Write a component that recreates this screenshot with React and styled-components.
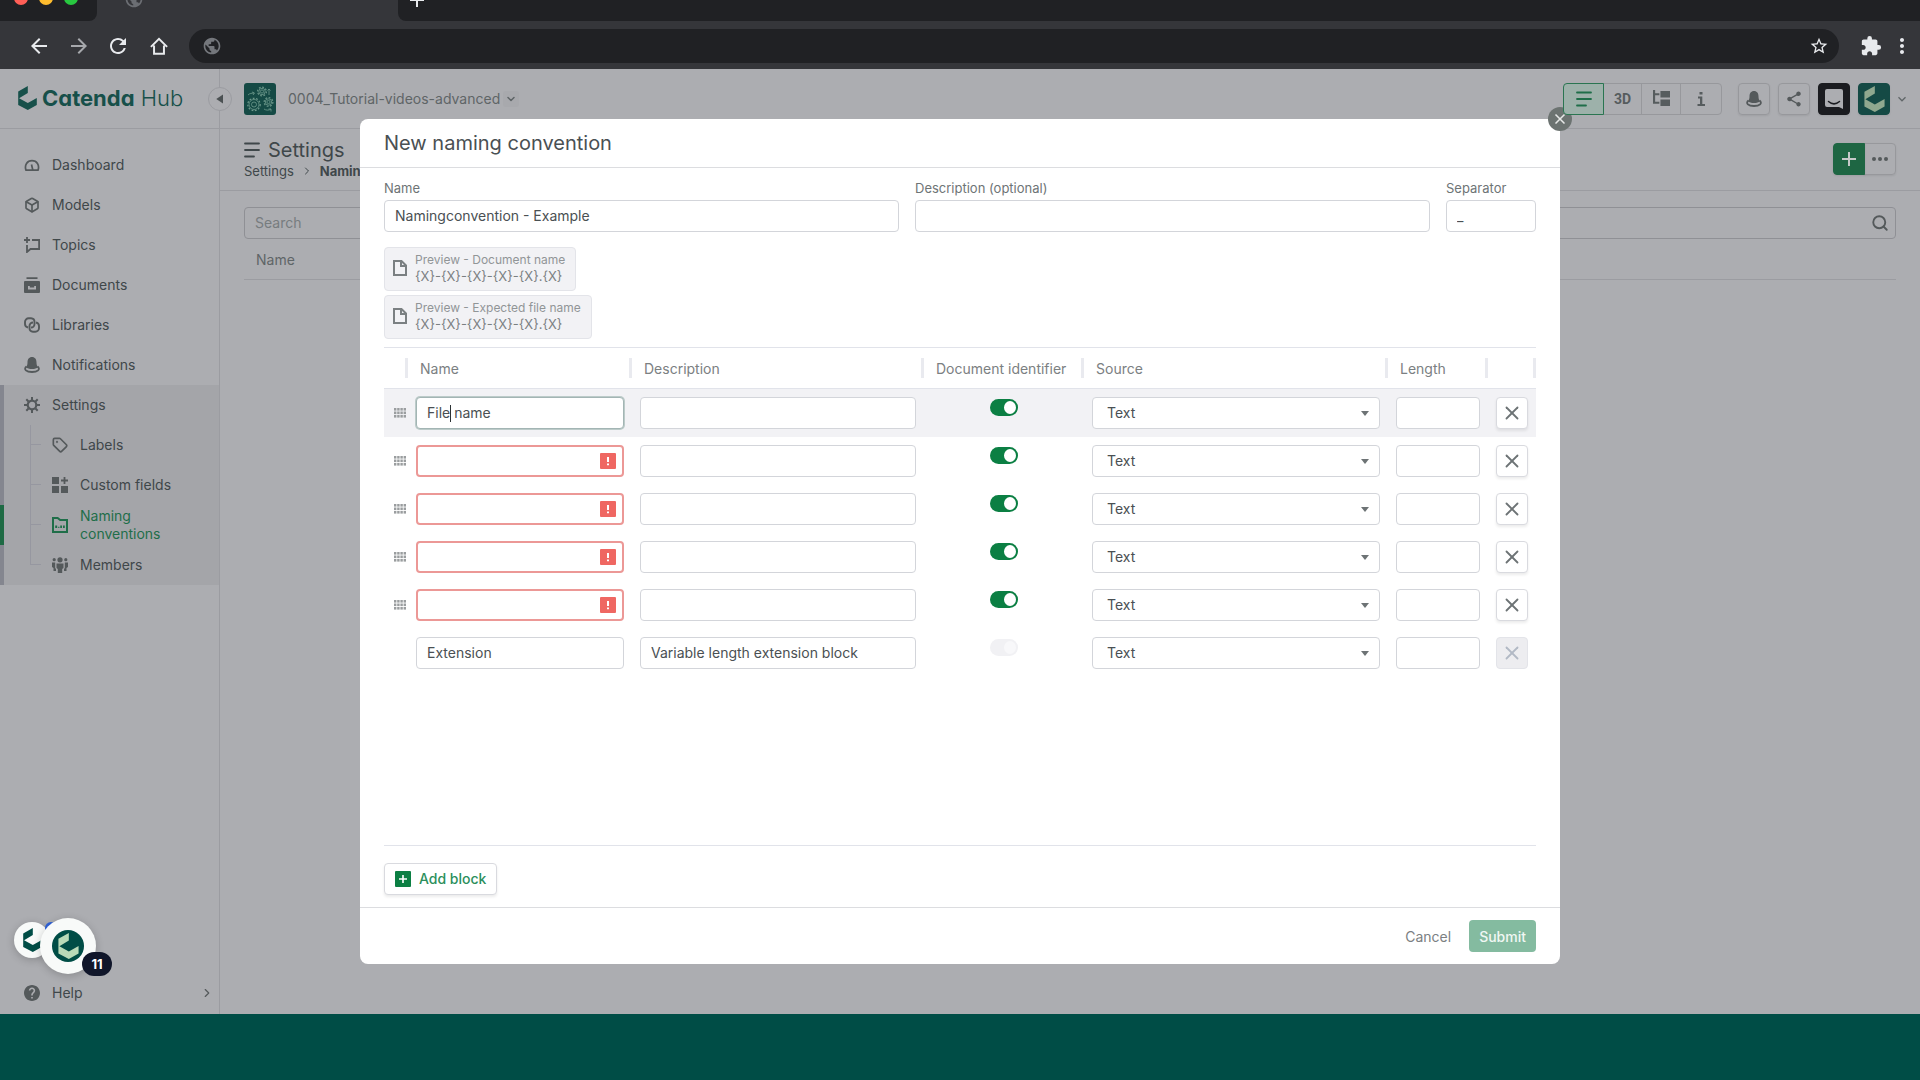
import React, { useState } from 'react';
import styled, { createGlobalStyle, css } from 'styled-components';
import {
  MdAdd,
  MdArrowBack,
  MdArrowForward,
  MdExtension,
  MdMoreVert,
  MdPublic,
  MdRefresh,
  MdShare,
  MdStarBorder,
} from 'react-icons/md';
import { Box, ChevronDown, ChevronRight, Search, Tag, X } from 'lucide-react';

const GlobalStyle = createGlobalStyle`
  *, *::before, *::after { box-sizing: border-box; }
  body {
    margin: 0;
    overflow: hidden;
    background: #004d46;
    color: #3f474a;
    font-family: Inter, "Liberation Sans", sans-serif;
    font-size: 14px;
    line-height: 18px;
  }
  button, input, select { font: inherit; color: inherit; margin: 0; }
  button { cursor: pointer; padding: 0; }
  a { color: inherit; text-decoration: none; }
  svg { display: block; flex: none; }
`;

const Page = styled.div`
  display: flex;
  flex-direction: column;
  height: 100vh;
`;

/* ---------- browser ---------- */

const Browser = styled.header`
  flex: none;
  background: #35363a;
`;

const TabStrip = styled.div`
  display: flex;
  height: 42px;
  margin-top: -21px;
`;

const StripPart = styled.div`
  display: flex;
  align-items: center;
  gap: 11px;
  padding: ${({ $grow }) => ($grow ? '0 7px' : '0 14px 4px')};
  background: #202124;
  width: ${({ $grow }) => ($grow ? 'auto' : '97px')};
  flex: ${({ $grow }) => ($grow ? '1' : 'none')};
  border-radius: ${({ $grow }) => ($grow ? '0 0 0 8px' : '0 0 8px 0')};
  color: #e8eaed;
`;

const Light = styled.span`
  width: 14px;
  height: 14px;
  border-radius: 50%;
  background: ${({ $color }) => $color};
`;

const ActiveTab = styled.div`
  display: flex;
  align-items: center;
  width: 301px;
  padding: 0 27px 2px;
  color: #6b6e73;
`;

const AddressRow = styled.div`
  display: flex;
  align-items: center;
  height: 48px;
  padding: 1px 13px 0 27px;
  color: #e8eaed;
`;

const ChromeButton = styled.button`
  display: flex;
  align-items: center;
  justify-content: center;
  width: ${({ $width }) => $width || 24}px;
  height: 24px;
  margin-right: ${({ $after }) => $after || 0}px;
  border: 0;
  background: none;
  color: ${({ $dim }) => ($dim ? '#a6a8ac' : '#e8eaed')};
`;

const Omnibox = styled.div`
  display: flex;
  align-items: center;
  flex: 1;
  height: 34px;
  margin-right: 20px;
  padding: 0 8px 0 13px;
  border-radius: 17px;
  background: #202124;
  color: #74777c;

  input {
    flex: 1;
    min-width: 0;
    border: 0;
    outline: 0;
    background: none;
    color: #e8eaed;
  }
`;

/* ---------- application shell ---------- */

const Workspace = styled.div`
  position: relative;
  display: flex;
  flex: 1;
  min-height: 0;
  background: #acadb1;
`;

const Sidebar = styled.aside`
  display: flex;
  flex-direction: column;
  flex: none;
  width: 220px;
  border-right: 1px solid #9b9ca1;
`;

const Brand = styled.a`
  position: relative;
  display: flex;
  align-items: center;
  height: 60px;
  padding: 0 0 2px 18px;
  gap: 5px;
  border-bottom: 1px solid #9b9ca1;
  color: #17504a;
  font-size: 22px;
  line-height: 28px;
  font-weight: 300;
  font-feature-settings: 'cv11', 'ss03';

  b { font-weight: 700; }
`;

const Collapse = styled.button`
  position: absolute;
  top: 18px;
  left: 208px;
  display: flex;
  align-items: center;
  justify-content: center;
  width: 24px;
  height: 24px;
  border: 1px solid #9b9ca1;
  border-radius: 50%;
  background: #acadb1;
  color: #4b5153;
`;

const Nav = styled.nav`
  display: flex;
  flex-direction: column;
  flex: 1;
  padding: 16px 0 1px;
`;

const NavLink = styled.a`
  display: flex;
  align-items: center;
  gap: 12px;
  height: 40px;
  padding-left: 24px;
  color: ${({ $active }) => ($active ? '#1f6e49' : '#3f474a')};

  > svg { color: ${({ $active }) => ($active ? '#1f6e49' : '#54595b')}; }
`;

const Group = styled.div`
  background: #a4a5a9;
  border-left: 4px solid #84868f;

  > ${NavLink} { padding-left: 20px; }
`;

const SubList = styled.ul`
  margin: 0;
  padding: 0;
  list-style: none;
  background: linear-gradient(#9697a0, #9697a0) 26px 0 / 1px 140px no-repeat;
`;

const SubItem = styled.li`
  margin-left: -4px;
  border-left: 4px solid ${({ $active }) => ($active ? '#1e6a44' : 'transparent')};
  background: linear-gradient(#9697a0, #9697a0) 26px 19px / 11px 1px no-repeat;

  ${NavLink} { padding-left: 48px; }
`;

const HelpLink = styled(NavLink)`
  margin-top: auto;
  padding-right: 5px;

  span { flex: 1; }
`;

const Main = styled.main`
  flex: 1;
  min-width: 0;
`;

const TopBar = styled.div`
  display: flex;
  align-items: center;
  height: 60px;
  padding: 0 14px 0 24px;
  border-bottom: 1px solid #9b9ca1;
  color: #5f6567;
`;

const ProjectName = styled.button`
  display: flex;
  align-items: center;
  gap: 3px;
  margin: 0 auto 0 12px;
  border: 0;
  background: none;
`;

const ChevronBox = styled.span`
  display: flex;
  padding: 2px;
  border-radius: 3px;
  background: #a8a9ad;
`;

const Segments = styled.div`
  display: flex;
  margin-right: 16px;
`;

const Segment = styled.button`
  display: flex;
  align-items: center;
  justify-content: center;
  width: ${({ $width }) => $width}px;
  height: 32px;
  margin-left: -1px;
  border: 1px solid #97989c;
  background: none;
  color: #565c5e;
  font-family: Roboto, sans-serif;
  font-weight: 700;

  &:first-child { border-radius: 4px 0 0 4px; margin-left: 0; }
  &:last-child { border-radius: 0 4px 4px 0; }
  ${({ $active }) => $active && css`
    z-index: 1;
    border-color: #2a7551;
    background: #9db1aa;
    color: #1f6e49;
  `}
`;

const IconButton = styled.button`
  display: flex;
  align-items: center;
  justify-content: center;
  width: 32px;
  height: 32px;
  margin-right: 8px;
  border: 1px solid #97989c;
  border-radius: 4px;
  background: none;
  box-shadow: 0 1px 2px rgba(0, 0, 0, 0.08);
  color: #54595b;
  ${({ $fill }) => $fill && css`
    border-color: ${$fill};
    background: ${$fill};
    color: #8fa88f;
  `}
`;

const TitleBar = styled.div`
  display: flex;
  justify-content: space-between;
  align-items: flex-start;
  height: 62px;
  padding: 10px 24px 0;
  border-bottom: 1px solid #9b9ca1;

  h1 {
    display: flex;
    align-items: center;
    gap: 8px;
    margin: 0;
    font-size: 20px;
    line-height: 22px;
    font-weight: 400;
  }
`;

const Crumbs = styled.div`
  display: flex;
  align-items: center;
  gap: 7px;
  margin-top: 1px;
  font-size: 13px;
`;

const Actions = styled.div`
  display: flex;
  margin-top: 4px;

  ${IconButton} { margin: 0; }
  ${IconButton}:first-child { z-index: 1; border-radius: 4px 0 0 4px; color: #c5c9c8; }
  ${IconButton}:last-child { margin-left: -1px; border-radius: 0 4px 4px 0; }
`;

const Listing = styled.section`
  padding: 16px 24px 0;
`;

const SearchBox = styled.label`
  display: flex;
  align-items: center;
  height: 32px;
  padding: 0 6px 0 10px;
  border: 1px solid #8f9095;
  border-radius: 4px;
  color: #54595b;

  input {
    flex: 1;
    border: 0;
    outline: 0;
    padding: 0;
    background: none;
  }
  input::placeholder { color: #777c7f; opacity: 1; }
`;

const ListHead = styled.div`
  height: 41px;
  padding: 12px;
  border-bottom: 1px solid #9b9ca1;
  color: #5f6567;
`;

/* ---------- floating chat ---------- */

const Bubble = styled.button`
  position: absolute;
  display: flex;
  align-items: center;
  justify-content: center;
  left: ${({ $small }) => ($small ? 14 : 40)}px;
  bottom: ${({ $small }) => ($small ? 56 : 40)}px;
  width: ${({ $small }) => ($small ? 36 : 56)}px;
  height: ${({ $small }) => ($small ? 36 : 56)}px;
  border: 0;
  border-radius: 50%;
  background: #f8faf9;
  box-shadow: 0 2px 8px rgba(0, 0, 0, 0.2);
  color: #004d46;
`;

const BlueDot = styled.span`
  position: absolute;
  left: 45px;
  bottom: 80px;
  width: 12px;
  height: 12px;
  border-radius: 50%;
  background: #2f62d9;
`;

const Disc = styled.span`
  display: flex;
  align-items: center;
  justify-content: center;
  width: 32px;
  height: 32px;
  border-radius: 50%;
  background: #004d46;
  color: #b9dab8;
`;

const Count = styled.span`
  position: absolute;
  left: 42px;
  bottom: -2px;
  width: 30px;
  border-radius: 12px;
  background: #10162a;
  color: #fff;
  font-size: 13px;
  line-height: 24px;
  font-weight: 700;
`;

/* ---------- dialog ---------- */

const Backdrop = styled.div`
  position: absolute;
  inset: 0;
  display: flex;
  align-items: stretch;
  justify-content: center;
  padding: 50px 48px;
`;

const Dialog = styled.form`
  position: relative;
  display: flex;
  flex-direction: column;
  width: 100%;
  max-width: 1200px;
  border-radius: 8px;
  background: #fff;
  color: #4a5053;
`;

const DialogTitle = styled.h2`
  flex: none;
  margin: 0;
  padding: 12px 24px;
  border-bottom: 1px solid #dcdde0;
  font-size: 20px;
  line-height: 24px;
  font-weight: 400;
`;

const CloseButton = styled.button`
  position: absolute;
  top: -12px;
  right: -12px;
  display: flex;
  align-items: center;
  justify-content: center;
  width: 24px;
  height: 24px;
  border: 0;
  border-radius: 50%;
  background: #6c7371;
  color: #e6e8e7;
`;

const DialogBody = styled.div`
  display: flex;
  flex-direction: column;
  flex: 1;
  min-height: 0;
  padding: 12px 24px 0;
`;

const Fields = styled.div`
  display: grid;
  grid-template-columns: 1fr 1fr 90px;
  gap: 16px;
`;

const Field = styled.label`
  display: flex;
  flex-direction: column;
  gap: 4px;
  color: #6e7476;
  font-size: 13px;
  line-height: 16px;
`;

const TextInput = styled.input`
  display: block;
  width: 100%;
  height: 32px;
  padding: 0 10px 1px;
  border: 1px solid #d3d5da;
  border-radius: 4px;
  outline: 0;
  background: #fff;
  color: #4a5053;
  font-size: 14px;
  ${({ $invalid }) => $invalid && css`
    border: 2px solid #ec9896;
  `}
  ${({ $focused }) => $focused && css`
    border-color: #a3b5b4;
    box-shadow: 0 0 0 1px #bccbc9;
  `}
`;

const Previews = styled.div`
  display: flex;
  flex-direction: column;
  align-items: flex-start;
  gap: 4px;
  margin: 15px 0 8px;
`;

const Preview = styled.div`
  display: flex;
  align-items: center;
  gap: 7px;
  height: 44px;
  padding: 0 10px 2px 7px;
  border: 1px solid #e3e4e9;
  border-radius: 4px;
  background: #f2f2f5;
  color: #7b8082;
  font-size: 13px;
  line-height: 17px;

  small {
    display: block;
    color: #919597;
    font-size: 12px;
  }
`;

const TableArea = styled.div`
  flex: 1;
  min-height: 0;
  overflow: auto;
  border-top: 1px solid #e1e3ea;
  border-bottom: 1px solid #e1e3ea;
`;

const Table = styled.table`
  width: 100%;
  border-collapse: separate;
  border-spacing: 0;
  table-layout: fixed;
`;

const HeadCell = styled.th`
  width: ${({ $width }) => ($width ? `${$width}px` : 'auto')};
  height: 41px;
  padding: 2px 0 0 12px;
  border-bottom: 1px solid #e1e3ea;
  background: linear-gradient(#e9eaef, #e9eaef) right 0 top 10px / 3px 20px no-repeat;
  color: #7b8082;
  font-weight: 400;
  text-align: left;
`;

const BlockRow = styled.tr`
  background: ${({ $active }) => ($active ? '#f2f2f5' : 'transparent')};
`;

const Cell = styled.td`
  height: 48px;
  padding: ${({ $flush }) => ($flush ? '0 0 0 10px' : '8px')};
  vertical-align: ${({ $top }) => ($top ? 'top' : 'middle')};
  color: #9a9d9f;
`;

const Control = styled.div`
  position: relative;

  > svg {
    position: absolute;
    top: 8px;
    right: 8px;
    pointer-events: none;
  }
`;

const Caret = styled.span`
  position: absolute;
  top: 8px;
  left: 34px;
  width: 1px;
  height: 17px;
  background: #2c3234;
`;

const Toggle = styled.input`
  appearance: none;
  display: block;
  width: 28px;
  height: 17px;
  margin: 2px auto 0;
  border-radius: 9px;
  background: #0b7f43;

  &::after {
    content: '';
    display: block;
    width: 12px;
    height: 13px;
    margin: 2px 2px 2px auto;
    border-radius: 50%;
    background: #fff;
  }
  &:disabled { background: #f1f1f4; }
  &:disabled::after { background: #f8f8fa; }
`;

const SelectInput = styled.select`
  appearance: none;
  display: block;
  width: 100%;
  height: 32px;
  padding: 0 14px;
  border: 1px solid #d3d5da;
  border-radius: 4px;
  background: #fff;
  color: #4a5053;
`;

const RemoveButton = styled.button`
  display: flex;
  align-items: center;
  justify-content: center;
  width: 32px;
  height: 32px;
  border: 1px solid #d9dadf;
  border-radius: 4px;
  background: #fff;
  box-shadow: 0 2px 3px rgba(0, 0, 0, 0.08);
  color: #6d7375;

  &:disabled {
    border-color: #e3e4e9;
    background: #ededf0;
    box-shadow: none;
    color: #b2b9c5;
  }
`;

const AddBar = styled.div`
  padding: 17px 0 12px;
`;

const AddButton = styled.button`
  display: flex;
  align-items: center;
  gap: 8px;
  height: 32px;
  padding: 0 10px;
  border: 1px solid #d9dadf;
  border-radius: 4px;
  background: #fff;
  box-shadow: 0 2px 3px rgba(0, 0, 0, 0.08);
  color: #2c8f5c;
  font-weight: 500;
`;

const DialogFooter = styled.div`
  display: flex;
  justify-content: flex-end;
  gap: 8px;
  padding: 12px 24px;
  border-top: 1px solid #dcdde0;
`;

const FooterButton = styled.button`
  height: 32px;
  padding: 1px 10px 0;
  border: 0;
  border-radius: 4px;
  background: ${({ $primary }) => ($primary ? '#84bba0' : 'none')};
  color: ${({ $primary }) => ($primary ? '#f0f7f3' : '#7b8082')};
  font-weight: ${({ $primary }) => ($primary ? 500 : 400)};
`;

const PageFooter = styled.footer`
  flex: none;
  height: 66px;
  background: #004d46;
`;

/* ---------- icons ---------- */

const Icon = ({ size = 16, children, ...rest }) => (
  <svg width={size} height={size} viewBox="0 0 16 16" fill="currentColor" aria-hidden="true" {...rest}>
    {children}
  </svg>
);

const Mark = ({ height }) => (
  <svg width={Math.round(height * 0.79)} height={height} viewBox="0 0 31 40" fill="currentColor" aria-hidden="true">
    <path d="M16 0v11.500L1.500 20.500 16 28.500 31 20v11.500L16 40 0 31.500V9z" />
  </svg>
);

const HomeIcon = () => (
  <svg width="18" height="18" viewBox="0 0 20 20" fill="none" stroke="currentColor" strokeWidth="2.200">
    <path d="M1 11 10 2l9 9M4.500 9.500v9h11v-9" />
  </svg>
);

const HelpIcon = () => (
  <svg width="16" height="16" viewBox="2 2 20 20" fill="currentColor" aria-hidden="true">
    <path d="M12 2C6.480 2 2 6.480 2 12s4.480 10 10 10 10-4.480 10-10S17.520 2 12 2zm1 17h-2v-2h2v2zm2.070-7.750l-.9.920C13.450 12.900 13 13.500 13 15h-2v-.5c0-1.100.450-2.100 1.170-2.830l1.240-1.260c.370-.360.590-.860.590-1.410 0-1.100-.9-2-2-2s-2 .9-2 2H8c0-2.210 1.790-4 4-4s4 1.790 4 4c0 .880-.360 1.680-.930 2.250z" />
  </svg>
);

const DashboardIcon = () => (
  <Icon fill="none" stroke="currentColor" strokeWidth="1.700">
    <path d="M2 13.200C.2 8 3.200 3.600 8 3.600s7.800 4.400 6 9.600zM8.800 13 7.500 7.500" />
  </Icon>
);

const TopicsIcon = () => (
  <Icon fill="none" stroke="currentColor" strokeWidth="1.800">
    <path d="M3 0v6M0 3h6M8 3h7.100v9H6.500L3 15V8" />
  </Icon>
);

const DocumentsIcon = () => (
  <Icon>
    <path d="M2.500.3h11v1.800h-11zM1 4h14a1 1 0 0 1 1 1v10a1 1 0 0 1-1 1H1a1 1 0 0 1-1-1V5a1 1 0 0 1 1-1zm3 5v3.500h8V9h-1.800v1.500H5.800V9z" fillRule="evenodd" />
  </Icon>
);

const LibrariesIcon = () => (
  <Icon fill="none" stroke="currentColor" strokeWidth="1.900">
    <path d="M4 10.500A3.700 3.700 0 0 1 1 7V5a3.700 3.700 0 0 1 3.700-3.700H7A3.700 3.700 0 0 1 10.500 5v2A3.500 3.500 0 0 1 7 10.500" />
    <path d="M12 5.500A3.700 3.700 0 0 1 15 9v2a3.700 3.700 0 0 1-3.700 3.700H9A3.700 3.700 0 0 1 5.500 11V9A3.500 3.500 0 0 1 9 5.500" />
  </Icon>
);

const BellIcon = () => (
  <Icon>
    <path d="M8 0C5 0 3.500 2.300 3.500 5.500 3.500 7.500 3 9 1.900 10c1.300 1.400 3.500 2 6.100 2s4.800-.6 6.100-2c-1.100-1-1.600-2.500-1.600-4.500C12.500 2.300 11 0 8 0z" />
    <path d="M2.500 9.500C-1 12.500 2.500 15 8 15s9-2.500 5.500-5.500" fill="none" stroke="currentColor" strokeWidth="1.800" />
  </Icon>
);

const GearIcon = () => (
  <Icon fill="none" stroke="currentColor">
    <circle cx="8" cy="8" r="4.300" strokeWidth="2.200" />
    <path d="M8 0v3M8 13v3M0 8h3M13 8h3M2.300 2.300l2.200 2.200M11.500 11.500l2.200 2.200M13.700 2.300l-2.200 2.200M4.500 11.500l-2.200 2.200" strokeWidth="2" />
  </Icon>
);

const FieldsIcon = () => (
  <Icon>
    <path d="M0 0h7v7H0zM0 9h7v7H0zM9 9h7v7H9zM11.600 0h1.800v2.600H16v1.800h-2.600V7h-1.800V4.400H9V2.600h2.600z" />
  </Icon>
);

const NamingIcon = () => (
  <Icon>
    <path d="M0 0h6l2.500 2H16v14H0zm2 2v12h12V4H7.800L5.300 2z" fillRule="evenodd" />
    <path d="M3.200 8.500h2V11h-2zM6.200 9.800h1.200V11H6.200zM8.200 8.500h1.800V11H8.200zM11 8.500h1.800V11H11z" />
  </Icon>
);

const MembersIcon = () => (
  <Icon>
    <circle cx="8" cy="2.800" r="2.600" />
    <circle cx="2.200" cy="2.700" r="1.600" />
    <circle cx="13.800" cy="2.700" r="1.600" />
    <path d="M4.500 6.500h7V11l-1.300 1v4H5.800v-4l-1.300-1zM0 5.500h3.200V11l.8 1v2H1.500v-3L0 10zM16 5.500h-3.200V11l-.8 1v2h2.500v-3l1.500-1z" />
  </Icon>
);

const LinesIcon = () => (
  <Icon fill="none" stroke="currentColor" strokeWidth="1.800" strokeLinecap="round">
    <path d="M1 1.500h14M1 8h14M1 14.500h9" />
  </Icon>
);

const TreeIcon = () => (
  <Icon size={17}>
    <path d="M0 0h2v3h4v2H2v6h4v2H0zM7 1h9v6H7zM7 9h9v6H7z" />
  </Icon>
);

const InfoIcon = () => (
  <Icon>
    <path d="M6.500 1h3v2.500h-3zM5 5.500h4.300V13H12v2H4.500v-2H7V7.500H5z" />
  </Icon>
);

const InboxIcon = () => (
  <svg width="20" height="22" viewBox="0 0 20 22" aria-hidden="true">
    <path d="M3 1h14a2 2 0 0 1 2 2v18l-4-2H3a2 2 0 0 1-2-2V3a2 2 0 0 1 2-2z" fill="#acadb1" />
    <path d="M4.500 13.500c3.500 3 7.500 3 11 0" fill="none" stroke="#1b1c20" strokeWidth="1.500" strokeLinecap="round" />
  </svg>
);

const Cog = ({ x, y, r }) => (
  <g transform={`translate(${x} ${y})`}>
    <circle r={r} />
    <circle r={r + 1.2} strokeDasharray="1.800 1.600" strokeWidth="1.200" />
    <circle r={r * 0.5} />
  </g>
);

const ProjectIcon = () => (
  <svg width="32" height="32" viewBox="0 0 32 32" fill="none" stroke="#6f9a8d" strokeWidth="0.800" aria-hidden="true">
    <rect width="32" height="32" rx="3" fill="#154a45" stroke="none" />
    <Cog x={10} y={21.5} r={5} />
    <Cog x={18} y={8.5} r={3.2} />
    <Cog x={24.5} y={19} r={3.2} />
    <path d="M4 12c2-2 3.500-1.500 6-2M8 9l2.500 1L9 12M25 12V6m-1.500 1.500L25 6l1.500 1.500M20 26c2 1.500 5 1.500 7 0m0 2.500V26h-2.500" />
  </svg>
);

const FileIcon = () => (
  <svg width="16" height="18" viewBox="0 0 16 18" fill="none" stroke="currentColor" strokeWidth="2" aria-hidden="true">
    <path d="M2 2h7.500L14 6.500V16H2zM9 2v5h5" />
  </svg>
);

const GripIcon = () => (
  <svg width="12" height="10" viewBox="0 0 12 10" fill="currentColor" aria-hidden="true">
    {[0, 3.5, 7].map((y) =>
      [0, 3.2, 6.4, 9.6].map((x) => <rect key={`${x}-${y}`} x={x} y={y} width="2.400" height="2.600" />)
    )}
  </svg>
);

const AlertIcon = () => (
  <Icon>
    <rect width="16" height="16" rx="1" fill="#ef6762" />
    <path d="M7 4h2v5H7zM7 10.500h2v1.800H7z" fill="#fff" />
  </Icon>
);

const ArrowIcon = () => (
  <Icon>
    <path d="M5 6h8l-4 5z" fill="#6d7375" />
  </Icon>
);

const PlusSquare = () => (
  <Icon>
    <rect width="16" height="16" rx="1" fill="#0b7f43" />
    <path d="M7.200 4h1.600v3.200H12v1.600H8.800V12H7.200V8.800H4V7.200h3.200z" fill="#fff" />
  </Icon>
);

/* ---------- data ---------- */

const navItems = [
  { label: 'Dashboard', icon: <DashboardIcon /> },
  { label: 'Models', icon: <Box size={16} strokeWidth={2.5} /> },
  { label: 'Topics', icon: <TopicsIcon /> },
  { label: 'Documents', icon: <DocumentsIcon /> },
  { label: 'Libraries', icon: <LibrariesIcon /> },
  { label: 'Notifications', icon: <BellIcon /> },
];

const settingsItems = [
  { label: 'Labels', icon: <Tag size={16} strokeWidth={2.5} /> },
  { label: 'Custom fields', icon: <FieldsIcon /> },
  { label: <>Naming<br />conventions</>, icon: <NamingIcon />, active: true },
  { label: 'Members', icon: <MembersIcon /> },
];

const initialBlocks = [
  { name: 'File name', active: true },
  { name: '' },
  { name: '' },
  { name: '' },
  { name: '' },
  { name: 'Extension', description: 'Variable length extension block', fixed: true },
];

const columns = [
  { label: '', width: 24 },
  { label: 'Name', width: 224 },
  { label: 'Description' },
  { label: 'Document identifier', width: 160 },
  { label: 'Source', width: 304 },
  { label: 'Length', width: 100 },
  { label: '', width: 48 },
];

/* ---------- parts ---------- */

const BrowserBar = () => (
  <Browser>
    <TabStrip>
      <StripPart>
        <Light $color="#ff5f57" />
        <Light $color="#febc2e" />
        <Light $color="#28c840" />
      </StripPart>
      <ActiveTab><MdPublic size={20} /></ActiveTab>
      <StripPart $grow><MdAdd size={24} /></StripPart>
    </TabStrip>
    <AddressRow>
      <ChromeButton aria-label="Back" $after={16}><MdArrowBack size={24} /></ChromeButton>
      <ChromeButton aria-label="Forward" $after={15} $dim><MdArrowForward size={24} /></ChromeButton>
      <ChromeButton aria-label="Reload" $after={17}><MdRefresh size={24} /></ChromeButton>
      <ChromeButton aria-label="Home" $after={18}><HomeIcon /></ChromeButton>
      <Omnibox>
        <MdPublic size={20} />
        <input aria-label="Address" />
        <ChromeButton aria-label="Bookmark"><MdStarBorder size={20} /></ChromeButton>
      </Omnibox>
      <ChromeButton aria-label="Extensions" $after={14}><MdExtension size={22} /></ChromeButton>
      <ChromeButton aria-label="More" $width={10}><MdMoreVert size={24} /></ChromeButton>
    </AddressRow>
  </Browser>
);

const SideNav = () => (
  <Sidebar>
    <Brand href="#">
      <Mark height={24} />
      <span><b>Catenda</b> Hub</span>
    </Brand>
    <Nav>
      {navItems.map((item) => (
        <NavLink href="#" key={item.label}>{item.icon}{item.label}</NavLink>
      ))}
      <Group>
        <NavLink href="#"><GearIcon />Settings</NavLink>
        <SubList>
          {settingsItems.map((item, index) => (
            <SubItem key={index} $active={item.active}>
              <NavLink href="#" $active={item.active}>{item.icon}<span>{item.label}</span></NavLink>
            </SubItem>
          ))}
        </SubList>
      </Group>
      <HelpLink href="#"><HelpIcon /><span>Help</span><ChevronRight size={14} /></HelpLink>
    </Nav>
  </Sidebar>
);

const Content = () => (
  <Main>
    <TopBar>
      <ProjectIcon />
      <ProjectName>
        0004_Tutorial-videos-advanced
        <ChevronBox><ChevronDown size={12} strokeWidth={3} /></ChevronBox>
      </ProjectName>
      <Segments>
        <Segment $width={41} $active aria-label="List"><LinesIcon /></Segment>
        <Segment $width={39}>3D</Segment>
        <Segment $width={40} aria-label="Tree"><TreeIcon /></Segment>
        <Segment $width={42} aria-label="Information"><InfoIcon /></Segment>
      </Segments>
      <IconButton aria-label="Notifications"><BellIcon /></IconButton>
      <IconButton aria-label="Share"><MdShare size={18} /></IconButton>
      <IconButton aria-label="Messages" $fill="#1b1c20"><InboxIcon /></IconButton>
      <IconButton aria-label="Account" $fill="#154a45"><Mark height={26} /></IconButton>
      <Icon size={8} fill="none" stroke="currentColor" strokeWidth="2.500"><path d="M1 4.500l7 7 7-7" /></Icon>
    </TopBar>
    <TitleBar>
      <div>
        <h1><LinesIcon />Settings</h1>
        <Crumbs><a href="#">Settings</a><ChevronRight size={12} /><b>Naming conventions</b></Crumbs>
      </div>
      <Actions>
        <IconButton $fill="#1e6643" aria-label="Add"><MdAdd size={24} /></IconButton>
        <IconButton aria-label="More">
          <Icon>
            <circle cx="2" cy="8" r="2" />
            <circle cx="8" cy="8" r="2" />
            <circle cx="14" cy="8" r="2" />
          </Icon>
        </IconButton>
      </Actions>
    </TitleBar>
    <Listing>
      <SearchBox>
        <input aria-label="Search" placeholder="Search" />
        <Search size={18} strokeWidth={2.5} />
      </SearchBox>
      <ListHead>Name</ListHead>
    </Listing>
  </Main>
);

const Block = ({ block, onChange }) => (
  <BlockRow $active={block.active}>
    <Cell $flush>{!block.fixed && <GripIcon />}</Cell>
    <Cell>
      <Control>
        <TextInput
          aria-label="Block name"
          value={block.name}
          $invalid={!block.name}
          $focused={block.active}
          onChange={(e) => onChange(e.target.value)}
        />
        {!block.name && <AlertIcon />}
        {block.active && <Caret />}
      </Control>
    </Cell>
    <Cell><TextInput aria-label="Block description" defaultValue={block.description} /></Cell>
    <Cell $top>
      <Toggle type="checkbox" aria-label="Document identifier" defaultChecked={!block.fixed} disabled={block.fixed} />
    </Cell>
    <Cell>
      <Control>
        <SelectInput aria-label="Source"><option>Text</option></SelectInput>
        <ArrowIcon />
      </Control>
    </Cell>
    <Cell><TextInput aria-label="Length" /></Cell>
    <Cell>
      <RemoveButton type="button" aria-label="Remove block" disabled={block.fixed}><X size={22} /></RemoveButton>
    </Cell>
  </BlockRow>
);

const NamingDialog = () => {
  const [blocks, setBlocks] = useState(initialBlocks);

  const rename = (index, name) => {
    setBlocks(blocks.map((block, i) => (i === index ? { ...block, name } : block)));
  };

  const addBlock = () => {
    setBlocks([...blocks.slice(0, -1), { name: '' }, blocks[blocks.length - 1]]);
  };

  return (
    <Backdrop>
      <Dialog role="dialog" aria-labelledby="dialog-title" onSubmit={(e) => e.preventDefault()}>
        <DialogTitle id="dialog-title">New naming convention</DialogTitle>
        <CloseButton type="button" aria-label="Close"><X size={16} strokeWidth={2.5} /></CloseButton>
        <DialogBody>
          <Fields>
            <Field>Name<TextInput defaultValue="Namingconvention - Example" /></Field>
            <Field>Description (optional)<TextInput /></Field>
            <Field>Separator<TextInput defaultValue="_" /></Field>
          </Fields>
          <Previews>
            {['Document name', 'Expected file name'].map((label) => (
              <Preview key={label}>
                <FileIcon />
                <div><small>Preview - {label}</small>{'{X}-{X}-{X}-{X}-{X}.{X}'}</div>
              </Preview>
            ))}
          </Previews>
          <TableArea>
            <Table>
              <thead>
                <tr>
                  {columns.map((column, index) => (
                    <HeadCell key={index} $width={column.width}>{column.label}</HeadCell>
                  ))}
                </tr>
              </thead>
              <tbody>
                {blocks.map((block, index) => (
                  <Block key={index} block={block} onChange={(name) => rename(index, name)} />
                ))}
              </tbody>
            </Table>
          </TableArea>
          <AddBar>
            <AddButton type="button" onClick={addBlock}><PlusSquare />Add block</AddButton>
          </AddBar>
        </DialogBody>
        <DialogFooter>
          <FooterButton type="button">Cancel</FooterButton>
          <FooterButton type="submit" $primary>Submit</FooterButton>
        </DialogFooter>
      </Dialog>
    </Backdrop>
  );
};

const App = () => (
  <>
    <GlobalStyle />
    <Page>
      <BrowserBar />
      <Workspace>
        <SideNav />
        <Content />
        <Collapse aria-label="Collapse menu"><Icon size={12}><path d="M12 2v12L3 8z" /></Icon></Collapse>
        <NamingDialog />
        <Bubble $small aria-label="Assistant"><Mark height={24} /></Bubble>
        <BlueDot />
        <Bubble aria-label="Open chat">
          <Disc><Mark height={26} /></Disc>
          <Count>11</Count>
        </Bubble>
      </Workspace>
      <PageFooter />
    </Page>
  </>
);

export default App;
